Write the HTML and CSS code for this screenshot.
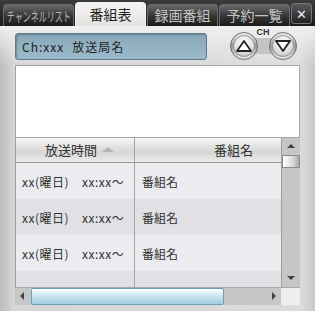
FILE: index.html
```html
<!DOCTYPE html>
<html lang="ja">
<head>
    <meta charset="UTF-8">
    <title>番組表</title>
    <link rel="stylesheet" href="styles.css">
</head>
<body>
    <div class="window">
        <div class="tabbar">
            <div class="tab narrow"><span class="squeeze">チャンネルリスト</span></div>
            <div class="tab active">番組表</div>
            <div class="tab">録画番組</div>
            <div class="tab">予約一覧</div>
            <div class="close-btn">✕</div>
        </div>

        <div class="main">
            <div class="top-row">
                <div class="station">Ch:xxx<span class="station-name">放送局名</span></div>
                <svg class="ch-buttons" width="72" height="36" viewBox="0 0 72 36">
                    <defs>
                        <linearGradient id="ring" x1="0" y1="0" x2="0" y2="1">
                            <stop offset="0" stop-color="#f4f4f4"/>
                            <stop offset="0.5" stop-color="#9a9a9a"/>
                            <stop offset="1" stop-color="#eeeeee"/>
                        </linearGradient>
                        <radialGradient id="face" cx="0.5" cy="0.35" r="0.7">
                            <stop offset="0" stop-color="#ffffff"/>
                            <stop offset="0.7" stop-color="#dcdcdc"/>
                            <stop offset="1" stop-color="#b5b5b5"/>
                        </radialGradient>
                    </defs>
                    <rect x="16" y="12" width="39" height="16" fill="#c4c4c4"/>
                    <circle cx="16" cy="20" r="13.5" fill="url(#ring)" stroke="#6e6e6e" stroke-width="1"/>
                    <circle cx="16" cy="20" r="10.5" fill="url(#face)" stroke="#8a8a8a" stroke-width="0.8"/>
                    <polygon points="9,25 23,25 16,15" fill="#fff" stroke="#222" stroke-width="1.8" stroke-linejoin="round"/>
                    <circle cx="55" cy="20" r="13.5" fill="url(#ring)" stroke="#6e6e6e" stroke-width="1"/>
                    <circle cx="55" cy="20" r="10.5" fill="url(#face)" stroke="#8a8a8a" stroke-width="0.8"/>
                    <polygon points="48,15 62,15 55,25" fill="#fff" stroke="#222" stroke-width="1.8" stroke-linejoin="round"/>
                    <text x="35" y="9" text-anchor="middle" font-family="Liberation Sans, sans-serif" font-size="9" font-weight="bold" fill="#333">CH</text>
                </svg>
            </div>

            <div class="info-box"></div>

            <div class="grid">
                <div class="grid-body">
                    <div class="grid-cols">
                        <div class="grid-head">
                            <div class="col-time head-time">放送時間 <span class="sort-up"></span></div>
                            <div class="col-name head-name">番組名</div>
                        </div>
                        <div class="grid-row">
                            <div class="col-time">xx(曜日)<span class="clock">xx:xx〜</span></div>
                            <div class="col-name">番組名</div>
                        </div>
                        <div class="grid-row alt">
                            <div class="col-time">xx(曜日)<span class="clock">xx:xx〜</span></div>
                            <div class="col-name">番組名</div>
                        </div>
                        <div class="grid-row">
                            <div class="col-time">xx(曜日)<span class="clock">xx:xx〜</span></div>
                            <div class="col-name">番組名</div>
                        </div>
                        <div class="grid-row alt last">
                            <div class="col-time"></div>
                            <div class="col-name"></div>
                        </div>
                    </div>
                    <div class="vscroll">
                        <div class="arrow-up"></div>
                        <div class="vthumb"></div>
                        <div class="vtrack"></div>
                        <div class="arrow-down"></div>
                    </div>
                </div>
                <div class="hscroll">
                    <div class="hbtn"><span class="arrow-left"></span></div>
                    <div class="hthumb"></div>
                    <div class="htrack"><span class="arrow-right"></span></div>
                    <div class="corner"></div>
                </div>
            </div>
        </div>
    </div>
</body>
</html>
```

FILE: styles.css
```css
body {
    margin: 0;
    font-family: "Noto Sans CJK JP", "DejaVu Sans", sans-serif;
    color: #333;
}
.window {
    width: 315px;
    height: 311px;
    overflow: hidden;
    background: linear-gradient(to right, #bcbcbc 0, #d6d6d6 14px, #dcdcdc 300px, #c8c8c8 315px);
    display: flex;
    flex-direction: column;
}

/* Barra de pestañas */
.tabbar {
    height: 26px;
    box-sizing: border-box;
    padding: 3px 0 0 3px;
    display: flex;
    align-items: flex-end;
    gap: 1px;
    background: linear-gradient(#3c3c3c, #1c1c1c);
}
.tab {
    width: 71px;
    height: 22px;
    flex: none;
    box-sizing: border-box;
    border: 1px solid #6a6a6a;
    border-bottom: none;
    border-radius: 4px 4px 0 0;
    background: linear-gradient(#6a6a6a, #383838 50%, #1a1a1a);
    color: #c4c4c4;
    font-size: 14px;
    line-height: 21px;
    text-align: center;
    white-space: nowrap;
    overflow: hidden;
}
.tab.narrow {
    font-size: 13px;
    color: #b8b8b8;
}
.squeeze {
    display: inline-block;
    transform: scaleX(0.62);
    margin: 0 -20px;
}
.tab.active {
    height: 24px;
    border-color: #f4f4f4;
    background: linear-gradient(#f4f4f4, #e2e2e2);
    color: #222;
    line-height: 23px;
}
.close-btn {
    width: 21px;
    height: 21px;
    flex: none;
    box-sizing: border-box;
    margin: 0 4px 2px auto;
    border: 1px solid #777;
    border-radius: 3px;
    background: linear-gradient(#5a5a5a, #222);
    color: #e8eef8;
    font-size: 13px;
    font-weight: bold;
    line-height: 19px;
    text-align: center;
    align-self: center;
}

/* Contenido */
.main {
    flex: 1;
    padding: 0 15px 0 15px;
    display: flex;
    flex-direction: column;
    background: linear-gradient(#f0f0f0, rgba(240, 240, 240, 0) 40px);
}
.top-row {
    display: flex;
    align-items: flex-start;
    height: 39px;
}
.station {
    width: 192px;
    height: 27px;
    margin-top: 7px;
    box-sizing: border-box;
    border: 1px solid #5f7c8c;
    border-radius: 3px;
    background: linear-gradient(#88a9bb, #9cbacb);
    box-shadow: inset 1px 1px 2px rgba(0, 0, 0, 0.25);
    padding-left: 6px;
    font-size: 12px;
    letter-spacing: 1px;
    line-height: 25px;
    color: #222;
}
.station-name {
    margin-left: 8px;
}
.ch-buttons {
    margin-left: 21px;
    display: block;
}
.info-box {
    height: 73px;
    box-sizing: border-box;
    border: 1px solid #a4a4a4;
    background: #fff;
}

/* Tabla de programas */
.grid {
    display: flex;
    flex-direction: column;
}
.grid-body {
    display: flex;
    height: 149px;
    border-left: 1px solid #9c9c9c;
    overflow: hidden;
}
.grid-cols {
    flex: 1;
}
.grid-head {
    display: flex;
    height: 25px;
    box-sizing: border-box;
    border-bottom: 1px solid #999;
    background: linear-gradient(#f6f6f6, #e6e6e6 30%, #d6d6d6 60%, #ececec);
    font-size: 13px;
    line-height: 24px;
}
.grid-row {
    display: flex;
    height: 36px;
    background: #ebebf0;
    font-size: 12px;
    line-height: 38px;
}
.grid-row.alt {
    background: #e0e0e5;
}
.col-time {
    width: 119px;
    flex: none;
    box-sizing: border-box;
    border-right: 1px solid #a6a6a6;
    padding-left: 6px;
    letter-spacing: 0.5px;
    white-space: nowrap;
}
.clock {
    margin-left: 13px;
}
.col-name {
    flex: 1;
    padding-left: 7px;
}
.head-time {
    padding-left: 29px;
    letter-spacing: 0;
}
.head-name {
    text-align: right;
    padding-right: 28px;
}
.sort-up {
    display: inline-block;
    width: 0;
    height: 0;
    margin-left: 2px;
    border-left: 6px solid transparent;
    border-right: 6px solid transparent;
    border-bottom: 5px solid #b4b4b4;
    vertical-align: 3px;
}

/* Barras de desplazamiento */
.vscroll {
    width: 18px;
    flex: none;
    display: flex;
    flex-direction: column;
    background: #c6c6c6;
    border-left: 1px solid #a0a0a0;
}
.arrow-up, .arrow-down {
    height: 17px;
    position: relative;
}
.arrow-up::after, .arrow-down::after {
    content: "";
    position: absolute;
    left: 5px;
    top: 6px;
    border-left: 4px solid transparent;
    border-right: 4px solid transparent;
}
.arrow-up::after {
    border-bottom: 4px solid #444;
}
.arrow-down::after {
    border-top: 4px solid #444;
}
.vthumb {
    height: 11px;
    border: 1px solid #8a8a8a;
    background: linear-gradient(to right, #ffffff, #dadada 60%, #a8a8a8);
}
.vtrack {
    flex: 1;
}
.hscroll {
    display: flex;
    height: 17px;
    background: #c6c6c6;
    border-top: 1px solid #a8a8a8;
}
.hbtn {
    width: 16px;
    position: relative;
}
.arrow-left {
    position: absolute;
    left: 5px;
    top: 4px;
    border-top: 4px solid transparent;
    border-bottom: 4px solid transparent;
    border-right: 4px solid #444;
}
.hthumb {
    width: 193px;
    box-sizing: border-box;
    border: 1px solid #6e9fb8;
    border-radius: 2px;
    background: linear-gradient(#ffffff, #d6eaf4 35%, #a4cde0);
}
.htrack {
    flex: 1;
    position: relative;
}
.arrow-right {
    position: absolute;
    right: 5px;
    top: 4px;
    border-top: 4px solid transparent;
    border-bottom: 4px solid transparent;
    border-left: 4px solid #444;
}
.corner {
    width: 19px;
    background: #efefef;
}
```
